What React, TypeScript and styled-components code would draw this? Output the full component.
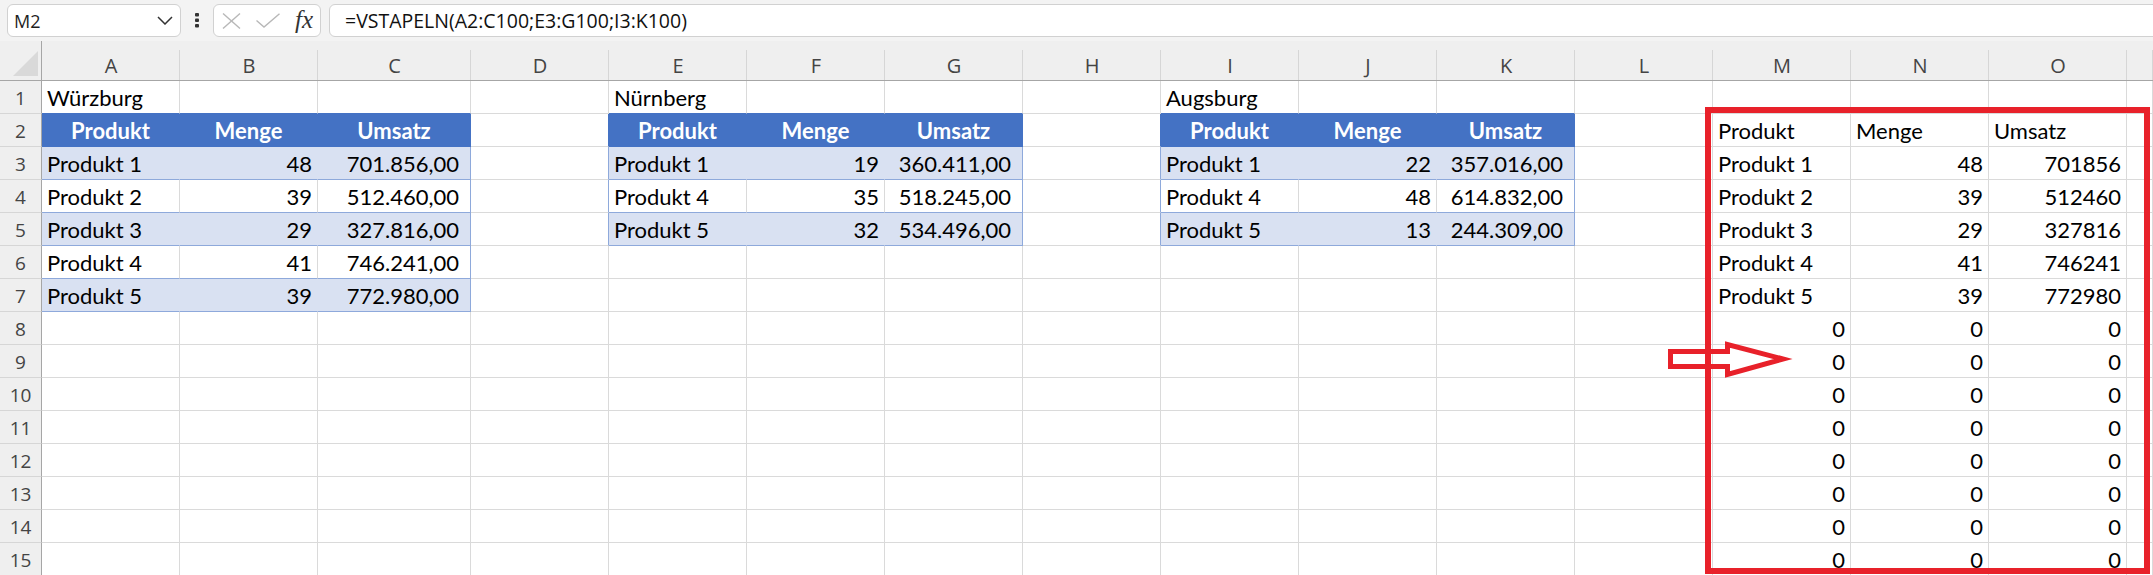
import React from "react";
import styled, { createGlobalStyle } from "styled-components";

const GRID = "#dadada";
const BLUE = "#4472c4";
const BAND = "#d9e1f2";
const EDGE = "#8ea9db";
const HEAD_BG = "#efefef";
const RED = "#e8212a";

const GlobalStyle = createGlobalStyle`
  html, body { margin: 0; padding: 0; background: #fff; overflow: hidden; }
  #root { width: 2153px; height: 575px; }
`;

const Page = styled.div`
  position: relative;
  width: 2153px;
  height: 575px;
  overflow: hidden;
  background: #fff;
`;

const Toolbar = styled.div`
  display: flex;
  align-items: flex-start;
  height: 41px;
  padding: 4px 0 0 7px;
  box-sizing: border-box;
  background: #f3f3f3;
  font-family: "Open Sans", "Noto Sans", sans-serif;
`;

const Box = styled.div`
  display: flex;
  align-items: center;
  height: 33px;
  box-sizing: border-box;
  border: 1px solid #d1d1d1;
  border-radius: 6px;
  background: #fff;
`;

const NameBox = styled(Box)`
  width: 174px;
  padding: 0 7px 0 6px;
  justify-content: space-between;
  font-size: 18px;
  color: #1f1f1f;
`;

const Dots = styled.div`
  width: 32px;
  height: 33px;
  display: flex;
  align-items: center;
  justify-content: center;
`;

const FxBox = styled(Box)`
  width: 108px;
  padding: 0 7px 0 8px;
  justify-content: space-between;
`;

const FxText = styled.span`
  font-family: "Liberation Serif", "DejaVu Serif", serif;
  font-style: italic;
  font-size: 25px;
  color: #333;
  line-height: 1;
  margin-top: -2px;
`;

const FormulaBox = styled(Box)`
  flex: 1;
  margin-left: 8px;
  margin-right: -20px;
  padding-left: 15px;
  font-size: 19.5px;
  color: #111;
  white-space: nowrap;
`;

const Grid = styled.div`
  display: grid;
  grid-template-columns: 42px 138px 138px 153px repeat(12, 138px) 1fr;
  grid-template-rows: 40px;
  grid-auto-rows: 33px;
`;

const Corner = styled.div`
  background: ${HEAD_BG};
  box-sizing: border-box;
  border-right: 1px solid #a6a6a6;
  border-bottom: 1px solid #a6a6a6;
  display: flex;
  align-items: flex-end;
  justify-content: flex-start;
  padding: 0 0 3px 13px;
`;

const ColHead = styled.div`
  position: relative;
  background: ${HEAD_BG};
  box-sizing: border-box;
  border-bottom: 1px solid #a6a6a6;
  display: flex;
  align-items: center;
  justify-content: center;
  padding-top: 9px;
  font-family: "Open Sans", "Noto Sans", sans-serif;
  font-size: 20px;
  color: #444;
  &::after {
    content: "";
    position: absolute;
    right: 0;
    top: 9px;
    bottom: 0;
    width: 1px;
    background: #d6d6d6;
  }
`;

const RowHead = styled.div`
  background: ${HEAD_BG};
  box-sizing: border-box;
  border-right: 1px solid #a6a6a6;
  border-bottom: 1px solid #d6d6d6;
  display: flex;
  align-items: center;
  justify-content: center;
  padding-top: 2px;
  font-family: "Open Sans", "Noto Sans", sans-serif;
  font-size: 19px;
  color: #444;
`;

type Align = "left" | "right" | "center";

const Cell = styled.div<{
  $bg: string;
  $right: string;
  $bottom: string;
  $align: Align;
  $bold: boolean;
  $color: string;
  $pr: number;
}>`
  box-sizing: border-box;
  background: ${(p) => p.$bg};
  border-right: 1px solid ${(p) => p.$right};
  border-bottom: 1px solid ${(p) => p.$bottom};
  display: flex;
  align-items: flex-end;
  justify-content: ${(p) =>
    p.$align === "left" ? "flex-start" : p.$align === "right" ? "flex-end" : "center"};
  padding: 0 ${(p) => p.$pr}px 2px 5px;
  font-family: "Lato", "Open Sans", sans-serif;
  font-size: 22px;
  line-height: 26px;
  font-weight: ${(p) => (p.$bold ? 700 : 400)};
  color: ${(p) => p.$color};
  white-space: nowrap;
  overflow: visible;
`;

const Frame = styled.div`
  position: absolute;
  left: 1705px;
  top: 107px;
  width: 445px;
  height: 467px;
  box-sizing: border-box;
  border: 6px solid ${RED};
  pointer-events: none;
`;

const ArrowSvg = styled.svg`
  position: absolute;
  left: 1660px;
  top: 335px;
  overflow: visible;
  pointer-events: none;
`;

type CellSpec = {
  text?: string;
  align: Align;
  bg: string;
  right: string;
  bottom: string;
  bold: boolean;
  color: string;
  pr: number;
};

const HEADERS = ["Produkt", "Menge", "Umsatz"];

const tables = [
  {
    c0: 1,
    title: "Würzburg",
    rows: [
      ["Produkt 1", "48", "701.856,00"],
      ["Produkt 2", "39", "512.460,00"],
      ["Produkt 3", "29", "327.816,00"],
      ["Produkt 4", "41", "746.241,00"],
      ["Produkt 5", "39", "772.980,00"],
    ],
  },
  {
    c0: 5,
    title: "Nürnberg",
    rows: [
      ["Produkt 1", "19", "360.411,00"],
      ["Produkt 4", "35", "518.245,00"],
      ["Produkt 5", "32", "534.496,00"],
    ],
  },
  {
    c0: 9,
    title: "Augsburg",
    rows: [
      ["Produkt 1", "22", "357.016,00"],
      ["Produkt 4", "48", "614.832,00"],
      ["Produkt 5", "13", "244.309,00"],
    ],
  },
];

const stacked = [
  ["Produkt 1", "48", "701856"],
  ["Produkt 2", "39", "512460"],
  ["Produkt 3", "29", "327816"],
  ["Produkt 4", "41", "746241"],
  ["Produkt 5", "39", "772980"],
];

const COLS = ["A", "B", "C", "D", "E", "F", "G", "H", "I", "J", "K", "L", "M", "N", "O", ""];
const ROWS = Array.from({ length: 15 }, (_, i) => i + 1);

function specFor(r: number, c: number): CellSpec {
  let s: CellSpec = {
    align: "left",
    bg: "#fff",
    right: GRID,
    bottom: GRID,
    bold: false,
    color: "#000",
    pr: 5,
  };
  for (const t of tables) {
    const rEnd = 2 + t.rows.length;
    const k = c - t.c0;
    if (r === 1 && k === 0) s.text = t.title;
    if (r === 1 && k >= 0 && k <= 2) s.bottom = BLUE;
    if (r >= 2 && r <= rEnd) {
      if (k === -1) s.right = r === 2 ? BLUE : EDGE;
      if (k >= 0 && k <= 2) {
        if (r === 2) {
          s = {
            text: HEADERS[k],
            align: "center",
            bg: BLUE,
            right: BLUE,
            bottom: BLUE,
            bold: true,
            color: "#fff",
            pr: 5,
          };
        } else {
          const band = (r - 3) % 2 === 0;
          s = {
            text: t.rows[r - 3][k],
            align: k === 0 ? "left" : "right",
            bg: band ? BAND : "#fff",
            right: k === 2 ? EDGE : band ? BAND : GRID,
            bottom: EDGE,
            bold: false,
            color: "#000",
            pr: k === 2 ? 11 : 5,
          };
        }
      }
    }
  }
  const m = c - 13;
  if (m >= 0 && m <= 2 && r >= 2) {
    if (r === 2) {
      s.text = HEADERS[m];
      s.align = "left";
    } else if (r <= 7) {
      s.text = stacked[r - 3][m];
      s.align = m === 0 ? "left" : "right";
    } else {
      s.text = "0";
      s.align = "right";
    }
  }
  return s;
}

const ChevronIcon = () => (
  <svg width="16" height="9" viewBox="0 0 16 9">
    <polyline points="1,1 8,8 15,1" fill="none" stroke="#333" strokeWidth="1.5" />
  </svg>
);

const DotsIcon = () => (
  <svg width="4" height="15" viewBox="0 0 4 15">
    <rect x="0" y="0" width="4" height="3.5" rx="1" fill="#333" />
    <rect x="0" y="5.5" width="4" height="3.5" rx="1" fill="#333" />
    <rect x="0" y="11" width="4" height="3.5" rx="1" fill="#333" />
  </svg>
);

const CancelIcon = () => (
  <svg width="19" height="16" viewBox="0 0 19 16">
    <line x1="1" y1="0.5" x2="18" y2="15.5" stroke="#b8b8b8" strokeWidth="1.4" />
    <line x1="18" y1="0.5" x2="1" y2="15.5" stroke="#b8b8b8" strokeWidth="1.4" />
  </svg>
);

const EnterIcon = () => (
  <svg width="24" height="15" viewBox="0 0 24 15">
    <polyline points="0.5,7.5 8,14 23.5,0.8" fill="none" stroke="#b8b8b8" strokeWidth="1.4" />
  </svg>
);

const SelectAll = () => (
  <svg width="26" height="26" viewBox="0 0 26 26">
    <polygon points="25,0 25,25 0,25" fill="#d9d9d9" />
  </svg>
);

export default function App() {
  return (
    <Page>
      <GlobalStyle />
      <Toolbar>
        <NameBox>
          <span>M2</span>
          <ChevronIcon />
        </NameBox>
        <Dots>
          <DotsIcon />
        </Dots>
        <FxBox>
          <CancelIcon />
          <EnterIcon />
          <FxText>fx</FxText>
        </FxBox>
        <FormulaBox>=VSTAPELN(A2:C100;E3:G100;I3:K100)</FormulaBox>
      </Toolbar>
      <Grid>
        <Corner>
          <SelectAll />
        </Corner>
        {COLS.map((l, i) => (
          <ColHead key={"h" + i}>{l}</ColHead>
        ))}
        {ROWS.map((r) => (
          <React.Fragment key={r}>
            <RowHead>{r}</RowHead>
            {COLS.map((_, i) => {
              const s = specFor(r, i + 1);
              return (
                <Cell
                  key={i}
                  $bg={s.bg}
                  $right={s.right}
                  $bottom={s.bottom}
                  $align={s.align}
                  $bold={s.bold}
                  $color={s.color}
                  $pr={s.pr}
                >
                  {s.text}
                </Cell>
              );
            })}
          </React.Fragment>
        ))}
      </Grid>
      <Frame />
      <ArrowSvg width="130" height="45" viewBox="0 0 130 45">
        <polygon
          points="10.5,16.5 67.5,16.5 67.5,9.5 123,24 67.5,39.5 67.5,31.5 10.5,31.5"
          fill="none"
          stroke={RED}
          strokeWidth="5"
          strokeLinejoin="miter"
        />
      </ArrowSvg>
    </Page>
  );
}
